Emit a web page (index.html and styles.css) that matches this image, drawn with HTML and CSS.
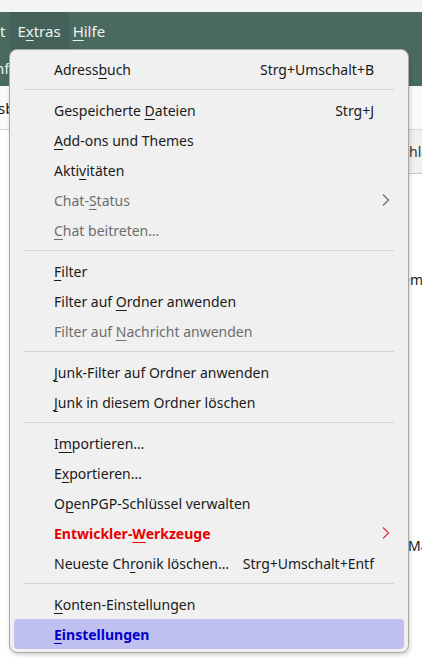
FILE: index.html
```html
<!DOCTYPE html>
<html lang="de">
<head>
<meta charset="utf-8">
<link rel="stylesheet" href="styles.css">
</head>
<body>
<div class="app">
  <div class="titlestrip"></div>
  <div class="menubar">
    <span class="mb-item mb-cut">t</span>
    <span class="mb-item mb-active">E<u>x</u>tras</span>
    <span class="mb-item"><u>H</u>ilfe</span>
  </div>
  <div class="toolbar"><span class="tb-text">nf</span></div>
  <div class="searchrow"><span class="sr-text">sb</span></div>
  <div class="content">
    <div class="col-left"></div>
    <div class="col-right">
      <div class="col-head">hla</div>
      <div class="col-body">
        <div class="cr-1">em</div>
        <div class="cr-2">Ma</div>
      </div>
    </div>
  </div>
</div>

<div class="menu">
  <div class="mi"><span class="lbl">Adress<u>b</u>uch</span><span class="key">Strg+Umschalt+B</span></div>
  <div class="sep"></div>
  <div class="mi"><span class="lbl">Gespeicherte <u>D</u>ateien</span><span class="key">Strg+J</span></div>
  <div class="mi"><span class="lbl"><u>A</u>dd-ons und Themes</span></div>
  <div class="mi"><span class="lbl">Akti<u>v</u>itäten</span></div>
  <div class="mi dis"><span class="lbl">Chat-<u>S</u>tatus</span><svg class="arrow" width="8" height="14" viewBox="0 0 8 14"><path d="M1 1.5 L6.5 7 L1 12.5" fill="none" stroke="currentColor" stroke-width="1.2"/></svg></div>
  <div class="mi dis"><span class="lbl"><u>C</u>hat beitreten…</span></div>
  <div class="sep"></div>
  <div class="mi"><span class="lbl"><u>F</u>ilter</span></div>
  <div class="mi"><span class="lbl">Filter auf <u>O</u>rdner anwenden</span></div>
  <div class="mi dis"><span class="lbl">Filter auf <u>N</u>achricht anwenden</span></div>
  <div class="sep"></div>
  <div class="mi"><span class="lbl"><u>J</u>unk-Filter auf Ordner anwenden</span></div>
  <div class="mi"><span class="lbl"><u>J</u>unk in diesem Ordner löschen</span></div>
  <div class="sep"></div>
  <div class="mi"><span class="lbl">I<u>m</u>portieren…</span></div>
  <div class="mi"><span class="lbl">E<u>x</u>portieren…</span></div>
  <div class="mi"><span class="lbl">O<u>p</u>enPGP-Schlüssel verwalten</span></div>
  <div class="mi dev"><span class="lbl">Entwickler-<u>W</u>erkzeuge</span><svg class="arrow" width="8" height="14" viewBox="0 0 8 14"><path d="M1 1.5 L6.5 7 L1 12.5" fill="none" stroke="currentColor" stroke-width="1.2"/></svg></div>
  <div class="mi"><span class="lbl">Neueste Ch<u>r</u>onik löschen…</span><span class="key">Strg+Umschalt+Entf</span></div>
  <div class="sep"></div>
  <div class="mi"><span class="lbl"><u>K</u>onten-Einstellungen</span></div>
  <div class="mi sel"><span class="lbl"><u>E</u>instellungen</span></div>
</div>
</body>
</html>
```
FILE: styles.css
```css
* { box-sizing: border-box; }
html, body { margin: 0; padding: 0; }
body {
  width: 422px;
  height: 663px;
  overflow: hidden;
  background: #ffffff;
  font-family: "Noto Sans", "Open Sans", sans-serif;
  font-size: 14px;
  color: #1a1a1a;
  position: relative;
}
u { text-decoration: underline; text-underline-offset: 3px; text-decoration-thickness: 1px; }

.app { display: flex; flex-direction: column; height: 663px; }
.titlestrip { height: 12px; background: #f4f4f4; }
.menubar {
  height: 38px;
  background: #4b6a5f;
  display: flex;
  align-items: stretch;
  color: #eef3f0;
  font-size: 15px;
}
.mb-item { display: flex; align-items: center; padding: 0 4px; }
.mb-cut { margin-left: -4px; padding-right: 5px; }
.mb-active { background: #45625a; padding: 0 8px 0 7px; }
.toolbar {
  height: 36px;
  background: #4b6a5f;
  color: #eef3f0;
  font-size: 15px;
  display: flex;
  align-items: center;
}
.tb-text { margin-left: -5px; }
.searchrow {
  height: 44px;
  background: #fafafa;
  border-bottom: 1px solid #d6d6d6;
  display: flex;
  align-items: center;
  font-size: 15px;
}
.sr-text { margin-left: -2px; }
.content { flex: 1; display: flex; }
.col-left { flex: 1; }
.col-right { width: 14px; display: flex; flex-direction: column; }
.col-head {
  height: 44px;
  background: #f0f0f0;
  border-bottom: 1px solid #c8c8c8;
  display: flex;
  align-items: center;
  white-space: nowrap;
  overflow: hidden;
  color: #333;
  padding-left: 1px;
  font-size: 14px;
}
.col-body { flex: 1; position: relative; white-space: nowrap; overflow: hidden; font-size: 14px; }
.cr-1 { margin-top: 96px; margin-left: -6px; }
.cr-2 { margin-top: 247px; }

.menu {
  position: absolute;
  left: 9px;
  top: 49px;
  width: 400px;
  background: #f0f0f0;
  border: 1px solid #a8a8a8;
  border-radius: 8px;
  box-shadow: 1px 2px 4px rgba(0,0,0,0.18);
  padding: 4px 4px 3px 4px;
  display: flex;
  flex-direction: column;
}
.mi {
  height: 30px;
  display: flex;
  align-items: center;
  padding-left: 40px;
  padding-right: 30px;
  color: #1a1a1a;
  white-space: nowrap;
  position: relative;
}
.lbl { flex: 1; }
.key { color: #1a1a1a; }
.dis { color: #6d6d6d; }
.arrow { position: absolute; right: 14px; top: 8px; color: #666; }
.dev { color: #e60000; font-weight: bold; }
.dev .arrow { color: #e03030; }
.sel { background: #c0c0f0; border-radius: 4px; color: #0000cc; font-weight: bold; }
.sep { height: 1px; background: #d4d4d4; margin: 5px 10px 5px 10px; }
```
